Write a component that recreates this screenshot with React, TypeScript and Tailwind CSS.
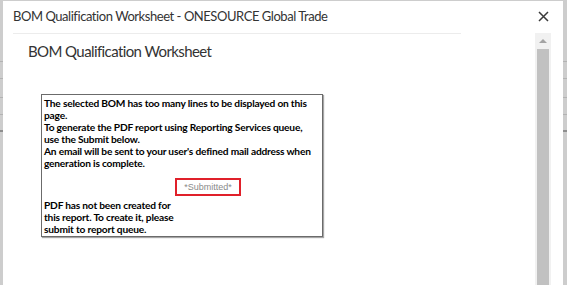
import { useState } from "react";

const leftLines = [62, 17, 19, 17, 17];

const Strip = ({ className }: { className: string }) => (
    <div className={`flex flex-col bg-[#cdcdcd] ${className}`}>
        {leftLines.map((h, i) => (
            <div
                key={i}
                style={{ height: h }}
                className={i === leftLines.length - 1 ? "border-b-2 border-[#8e8e8e]" : "border-b border-[#b3b3b3]"}
            />
        ))}
    </div>
);

const CloseIcon = () => (
    <svg width="11" height="11" viewBox="0 0 11 11" fill="none">
        <path d="M1 1L10 10M10 1L1 10" stroke="#3a3a3a" strokeWidth="1.5" />
    </svg>
);

export default function App() {
    const [submitted] = useState(true);

    return (
        <div className="flex h-[285px] w-[567px] overflow-hidden bg-[#cdcdcd] font-['Lato',sans-serif]">
            <Strip className="w-[3px] shrink-0" />

            <div className="mt-[1px] flex w-[560px] shrink-0 flex-col bg-white">
                <div className="flex h-[32px] items-center justify-between pl-[10px] pr-[14px]">
                    <h1 className="text-[13px] tracking-[-0.45px] text-[#333]">
                        BOM Qualification Worksheet - ONESOURCE Global Trade
                    </h1>
                    <button className="mt-[-1px] flex items-center">
                        <CloseIcon />
                    </button>
                </div>

                <div className="flex flex-1">
                    <div className="flex-1">
                        <div className="ml-[10px] h-px w-[448px] bg-[#ececec]" />

                        <h2 className="mt-[6px] pl-[25px] text-[15px] tracking-[-0.6px] text-[#333]">
                            BOM Qualification Worksheet
                        </h2>

                        <div className="ml-[38px] mt-[31px] w-[282px] border border-[#6b6b6b] px-[2px] pb-[1px] pt-[2px] text-[10.2px] font-bold leading-[12px] tracking-[-0.2px] text-black shadow-[1px_1px_1px_rgba(0,0,0,0.35)]">
                            <p className="whitespace-nowrap">The selected BOM has too many lines to be displayed on this</p>
                            <p>page.</p>
                            <p className="whitespace-nowrap">To generate the PDF report using Reporting Services queue,</p>
                            <p>use the Submit below.</p>
                            <p className="whitespace-nowrap">An email will be sent to your user's defined mail address when</p>
                            <p>generation is complete.</p>

                            <div className="mb-[3px] mt-[9px] flex justify-center pl-[52px]">
                                <span className="border-2 border-[#e0202a] px-[7px] py-[1px] font-['Liberation_Sans',sans-serif] text-[9px] font-normal leading-[12px] tracking-normal text-[#8a8a8a]">
                                    {submitted ? "*Submitted*" : "Submit"}
                                </span>
                            </div>

                            <p>PDF has not been created for</p>
                            <p>this report. To create it, please</p>
                            <p>submit to report queue.</p>
                        </div>
                    </div>

                    <div className="mr-[12px] flex w-[16px] flex-col bg-[#f1f1f1]">
                        <div className="flex h-[16px] items-center justify-center">
                            <div className="h-0 w-0 border-x-[4px] border-b-[4px] border-x-transparent border-b-[#a3a3a3]" />
                        </div>
                        <div className="mx-[2px] flex-1 bg-[#c1c1c1]" />
                    </div>
                </div>
            </div>

            <Strip className="w-[4px] shrink-0" />
        </div>
    );
}
